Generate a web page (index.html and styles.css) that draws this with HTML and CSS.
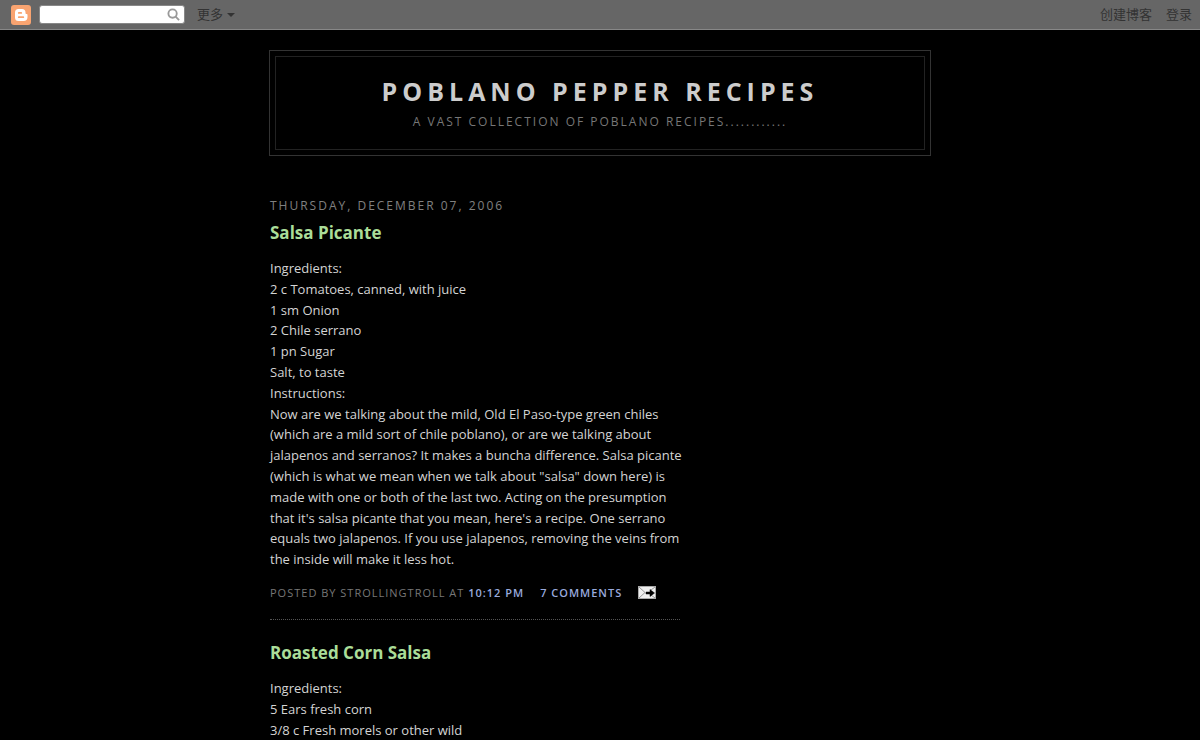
FILE: index.html
```html
<!DOCTYPE html>
<html lang="en">
<head>
  <meta charset="UTF-8">
  <meta name="viewport" content="width=device-width, initial-scale=1.0">
  <title>Poblano Pepper Recipes</title>
  <link rel="stylesheet" href="styles.css">
</head>
<body>
  <nav class="navbar" lang="zh-CN">
    <a class="navbar-logo" href="#" aria-label="Blogger">
      <svg width="20" height="20" viewBox="0 0 20 20">
        <rect width="20" height="20" rx="3" fill="#f9a471"/>
        <path fill="#fff" fill-rule="evenodd" d="M7.500 4h3.500a3.500 3.500 0 0 1 3.500 3.500v.6c0 .7.4 1 1 1s1 .4 1 1V12a4 4 0 0 1-4 4h-5A3.500 3.500 0 0 1 4 12.500v-5A3.500 3.500 0 0 1 7.500 4zM7.800 7a.9.9 0 0 0 0 1.800h2.400a.9.9 0 0 0 0-1.800zM7.800 11.300a.9.9 0 0 0 0 1.800h4.500a.9.900 0 0 0 0-1.800z"/>
      </svg>
    </a>
    <form class="navbar-search">
      <input class="search-input" type="text" aria-label="搜索">
      <button class="search-button" type="submit" aria-label="搜索">
        <svg width="13" height="13" viewBox="0 0 14 14" fill="none" stroke="#999" stroke-width="2">
          <circle cx="6" cy="6" r="4.500"/>
          <path d="M9.300 9.300L13 13"/>
        </svg>
      </button>
    </form>
    <button class="navbar-more" type="button">更多
      <svg width="8" height="4" viewBox="0 0 8 4"><path d="M0 0h8L4 4z" fill="#333"/></svg>
    </button>
    <div class="navbar-links">
      <a href="#">创建博客</a>
      <a href="#">登录</a>
    </div>
  </nav>

  <header class="header-wrapper">
    <div class="header">
      <h1 class="blog-title">Poblano Pepper Recipes</h1>
      <p class="description">A vast collection of Poblano Recipes............</p>
    </div>
  </header>

  <div class="outer-wrapper">
    <main class="main">
      <h2 class="date-header">Thursday, December 07, 2006</h2>

      <article class="post">
        <h3 class="post-title"><a href="#">Salsa Picante</a></h3>
        <div class="post-body">
          Ingredients:<br>
          2 c Tomatoes, canned, with juice<br>
          1 sm Onion<br>
          2 Chile serrano<br>
          1 pn Sugar<br>
          Salt, to taste<br>
          Instructions:<br>
          Now are we talking about the mild, Old El Paso-type green chiles<br>
          (which are a mild sort of chile poblano), or are we talking about<br>
          jalapenos and serranos? It makes a buncha difference. Salsa picante<br>
          (which is what we mean when we talk about "salsa" down here) is<br>
          made with one or both of the last two. Acting on the presumption<br>
          that it's salsa picante that you mean, here's a recipe. One serrano<br>
          equals two jalapenos. If you use jalapenos, removing the veins from<br>
          the inside will make it less hot.
        </div>
        <div class="post-footer">
          <span>Posted by strollingtroll at <a href="#">10:12 PM</a></span>
          <a href="#">7 comments</a>
          <a class="email-link" href="#" aria-label="Email Post">
            <svg width="18" height="13" viewBox="0 0 18 13">
              <rect x=".5" y=".5" width="17" height="12" fill="#efefef" stroke="#aaa"/>
              <path d="M1 1l6 5.500L1 12M17 1l-4 3M17 12l-4-3" fill="none" stroke="#999"/>
              <path d="M8 6h4V3.500l4.500 3.500-4.500 3.500V8H8z" fill="#000" stroke="#000" stroke-width=".5"/>
            </svg>
          </a>
        </div>
      </article>

      <article class="post">
        <h3 class="post-title"><a href="#">Roasted Corn Salsa</a></h3>
        <div class="post-body">
          Ingredients:<br>
          5 Ears fresh corn<br>
          3/8 c Fresh morels or other wild
        </div>
      </article>
    </main>
  </div>
</body>
</html>
```

FILE: styles.css
```css
* {
  margin: 0;
  padding: 0;
  box-sizing: border-box;
}

body {
  background: #000;
  color: #d4d4d4;
  font-family: "Trebuchet MS", "Open Sans", "Noto Sans CJK SC", sans-serif;
  font-size: 13px;
  line-height: 1.6;
}

a {
  color: #9ad;
  text-decoration: none;
}

/* Navbar */
.navbar {
  display: flex;
  align-items: center;
  height: 30px;
  padding: 0 8px 0 11px;
  background: #666;
  border-bottom: 1px solid #888;
  font-family: "Liberation Sans", "Noto Sans CJK SC", sans-serif;
}

.navbar-logo {
  display: flex;
  margin-right: 8px;
}

.navbar-search {
  display: flex;
  align-items: center;
  width: 146px;
  height: 19px;
  padding-right: 4px;
  background: #fff;
  border: 1px solid #888;
  border-radius: 3px;
}

.search-input {
  flex: 1;
  min-width: 0;
  border: none;
  outline: none;
  background: none;
}

.search-button {
  display: flex;
  border: none;
  background: none;
}

.navbar-more {
  display: flex;
  align-items: center;
  gap: 4px;
  margin-left: 12px;
  padding-top: 2px;
  border: none;
  background: none;
  color: #333;
  font: inherit;
}

.navbar-links {
  display: flex;
  gap: 14px;
  margin-left: auto;
  padding-top: 2px;
}

.navbar-links a {
  color: #333;
}

/* Header */
.header-wrapper {
  max-width: 662px;
  margin: 20px auto 0;
  padding: 5px;
  border: 1px solid #333;
}

.header {
  padding: 16px 20px 14px;
  border: 1px solid #222;
  text-align: center;
  text-transform: uppercase;
}

.blog-title {
  color: #ccc;
  font-size: 25px;
  line-height: 36px;
  letter-spacing: 5px;
}

.description {
  color: #777;
  font-size: 12px;
  line-height: 26px;
  letter-spacing: 2px;
}

/* Posts */
.outer-wrapper {
  max-width: 660px;
  margin: 0 auto;
  padding-top: 38px;
}

.main {
  max-width: 410px;
}

.date-header {
  color: #808080;
  font-size: 12px;
  font-weight: 500;
  line-height: 24px;
  letter-spacing: 2px;
  text-transform: uppercase;
}

.post {
  margin-bottom: 18px;
  padding-bottom: 16px;
  border-bottom: 1px dotted #555;
}

.post:last-child {
  margin-bottom: 0;
  padding-bottom: 0;
  border-bottom: none;
}

.post-title {
  padding: 3px 0 13px;
  font-size: 17px;
  line-height: 24px;
}

.post-title a {
  color: #ad9;
}

.post-body {
  white-space: nowrap;
}

.post-footer {
  display: flex;
  align-items: center;
  gap: 16px;
  padding-top: 13px;
  color: #777;
  font-size: 11px;
  line-height: 20px;
  letter-spacing: 1px;
  text-transform: uppercase;
  white-space: nowrap;
}

.post-footer a {
  font-weight: 600;
}

.email-link {
  display: flex;
}

@media (max-width: 480px) {
  .post-body,
  .post-footer {
    white-space: normal;
  }
}
```
